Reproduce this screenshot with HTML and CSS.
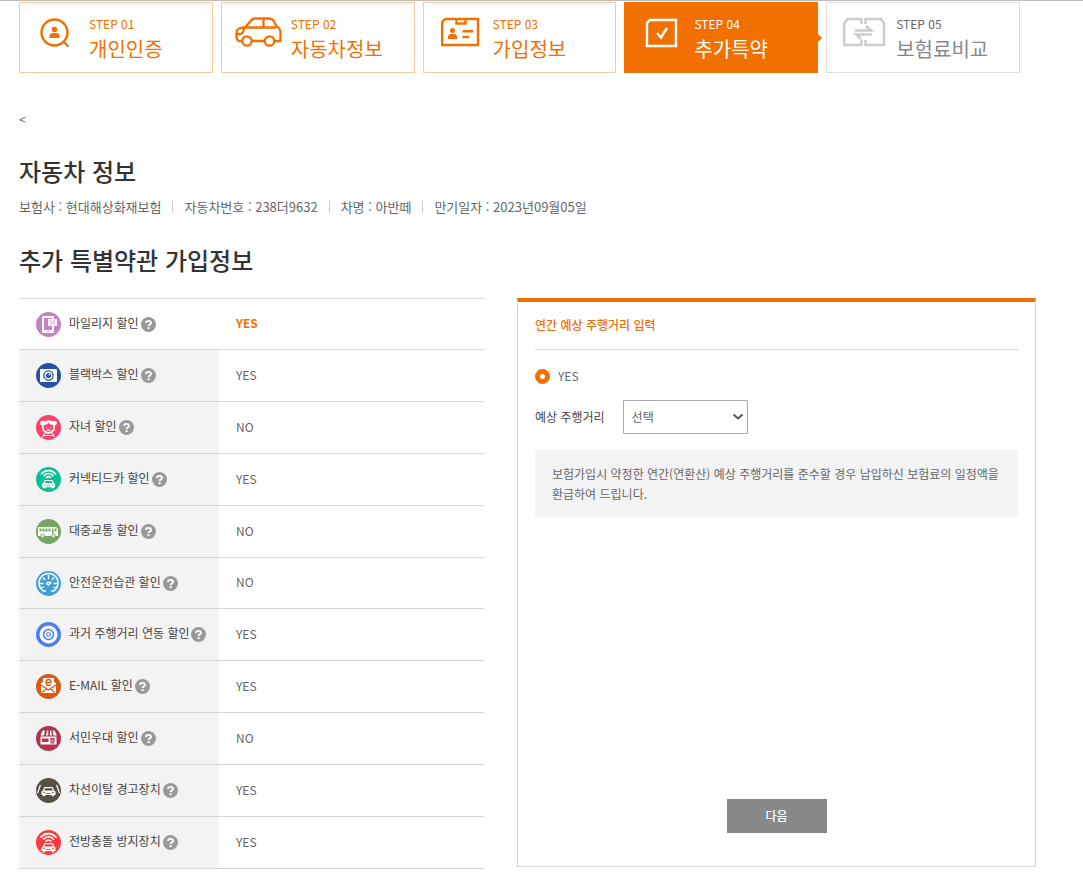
FILE: index.html
```html
<!DOCTYPE html>
<html lang="ko">
<head>
<meta charset="utf-8">
<meta name="viewport" content="width=device-width, initial-scale=1">
<title>추가특약</title>
<link rel="stylesheet" href="styles.css">
</head>
<body>
<svg class="defs" aria-hidden="true">
  <symbol id="help" viewBox="0 0 15 15">
    <circle cx="7.500" cy="7.500" r="7.500" fill="#999"/>
    <path d="M5 5.900C5 3.200 10 3.200 10 5.900C10 7.500 7.600 7.300 7.600 9" fill="none" stroke="#fff" stroke-width="1.900"/>
    <rect x="6.600" y="10.100" width="2" height="2" fill="#fff"/>
  </symbol>
  <symbol id="front-car" viewBox="0 0 16 10" preserveAspectRatio="none">
    <path d="M3.500 0.500h9l1.500 3.500 1.500 1v3.500h-1.500v1.500h-2.500v-1.500h-7v1.500H2v-1.500H.500V5L2 4z" fill="#fff"/>
    <path d="M4.300 1.700h7.400l.9 2.300H3.400z" fill="currentColor"/>
    <path d="M2 5.700l2.500.6M14 5.700l-2.500.6M5.500 7h5" stroke="currentColor" stroke-width=".8" fill="none"/>
  </symbol>
  <symbol id="waves" viewBox="0 0 18 10" preserveAspectRatio="none">
    <path d="M1 5Q9-3 17 5M3.700 7Q9 1.500 14.300 7M6.200 9Q9 6 11.800 9" fill="none" stroke="#fff" stroke-width="1.700"/>
  </symbol>
</svg>
<div class="page">
  <ol class="steps">
    <li class="step">
      <svg class="step-icon" viewBox="0 0 48 32"><g fill="none" stroke="#f27000" stroke-width="2.400"><circle cx="21.500" cy="15.500" r="13"/><path d="M30 24l5.500 5.500"/></g><circle cx="21.500" cy="12.500" r="2.800" fill="#f27000"/><path d="M16.500 21v-2q0-3 3.500-3h3q3.500 0 3.500 3v2z" fill="#f27000"/></svg>
      <div><span class="step-no">STEP 01</span><strong class="step-name">개인인증</strong></div>
    </li>
    <li class="step">
      <svg class="step-icon" viewBox="2 1 48 32"><g fill="none" stroke="#f27000" stroke-width="2.300"><path d="M9 25H6q-2.500-1-2.500-4v-4q0-4 4-5l5-1 6-7q1-1.500 4-1.500h13q4 0 5.500 3l2.500 5q4 1.500 4 6V25h-6M19 25h13M12 11.500h31M30.500 2.500v9M3.500 18h3q4 0 4.500-5.500"/><circle cx="14" cy="25" r="4.700"/><circle cx="36.500" cy="25" r="4.700"/></g></svg>
      <div><span class="step-no">STEP 02</span><strong class="step-name">자동차정보</strong></div>
    </li>
    <li class="step">
      <svg class="step-icon" viewBox="0 1 48 32"><g fill="none" stroke="#f27000" stroke-width="2.400"><path d="M5.200 29V6l3-3H41v26z"/><path d="M19.500 3v4.500h9V3" /><path d="M25.500 15.300H36M25.500 21H32"/></g><circle cx="15.500" cy="14.500" r="2.500" fill="#f27000"/><path d="M11 23v-2q0-3 3-3h3q3 0 3 3v2z" fill="#f27000"/></svg>
      <div><span class="step-no">STEP 03</span><strong class="step-name">가입정보</strong></div>
    </li>
    <li class="step step-active" aria-current="step">
      <svg class="step-icon" viewBox="0 1 48 32"><path d="M9 30V7l3-3h26v26z" fill="none" stroke="#fff" stroke-width="2.400"/><path d="M19 17l4 4.500L29 12" fill="none" stroke="#fff" stroke-width="2.400"/></svg>
      <div><span class="step-no">STEP 04</span><strong class="step-name">추가특약</strong></div>
    </li>
    <li class="step step-next">
      <svg class="step-icon" viewBox="0 1 48 32"><g fill="none" stroke="#ccc" stroke-width="2.400"><path d="M21.500 8V3H8L4.200 7v22h17.300v-5M25.500 8V3H41l3 4v22H25.500v-5"/><path d="M15 14.500h16l-5-4.500M32 18.500H16l5 4.500"/></g></svg>
      <div><span class="step-no">STEP 05</span><strong class="step-name">보험료비교</strong></div>
    </li>
  </ol>

  <a class="back" href="#" aria-label="이전">&lt;</a>

  <h1 class="heading">자동차 정보</h1>
  <ul class="car-info">
    <li>보험사 : 현대해상화재보험</li>
    <li>자동차번호 : 238더9632</li>
    <li>차명 : 아반떼</li>
    <li>만기일자 : 2023년09월05일</li>
  </ul>

  <h2 class="heading">추가 특별약관 가입정보</h2>
  <main class="columns">
    <table class="riders">
      <tbody>
        <tr class="selected"><th scope="row"><div class="rider"><svg class="rider-icon" viewBox="0 0 25 25"><circle cx="12.500" cy="12.500" r="12.500" fill="#c680c4"/><rect x="6" y="4" width="12" height="17" rx="1" fill="#fff"/><path d="M8 6h8v12H8z" fill="#c680c4"/><path d="M12 7h9v7h-3l-2 2v-2h-4z" fill="#fff"/><path d="M14 9h1M18 12h1M14.500 12.500l4-4" stroke="#c680c4"/><circle cx="12" cy="19.500" r=".8" fill="#c680c4"/></svg><span class="rider-name">마일리지 할인</span><button class="help" aria-label="마일리지 할인 도움말"><svg><use href="#help"/></svg></button></div></th><td>YES</td></tr>
        <tr><th scope="row"><div class="rider"><svg class="rider-icon" viewBox="0 0 25 25"><circle cx="12.500" cy="12.500" r="12.500" fill="#2950a3"/><rect x="4" y="6" width="17" height="13" rx="1" fill="#fff"/><circle cx="12.500" cy="12.500" r="4.600" fill="none" stroke="#2950a3" stroke-width="1.300"/><circle cx="12.500" cy="12.500" r="2.600" fill="#2950a3"/><circle cx="13.300" cy="11.700" r=".8" fill="#fff"/></svg><span class="rider-name">블랙박스 할인</span><button class="help" aria-label="블랙박스 할인 도움말"><svg><use href="#help"/></svg></button></div></th><td>YES</td></tr>
        <tr><th scope="row"><div class="rider"><svg class="rider-icon" viewBox="0 0 25 25"><circle cx="12.500" cy="12.500" r="12.500" fill="#fc406c"/><circle cx="6.300" cy="8" r="2.300" fill="#fff"/><circle cx="18.700" cy="8" r="2.300" fill="#fff"/><circle cx="12.500" cy="12" r="5.800" fill="none" stroke="#fff" stroke-width="1.700"/><path d="M7 10q5.500 0 5.500-3q0 3 5.500 3l-1-4H8z" fill="#fff"/><path d="M10.500 12v1M14.500 12v1M10.800 14.500q1.700 1.500 3.400 0M9 18l-2.500 4M16 18l2.500 4M8 20.500h9" stroke="#fff" fill="none" stroke-width="1.200"/></svg><span class="rider-name">자녀 할인</span><button class="help" aria-label="자녀 할인 도움말"><svg><use href="#help"/></svg></button></div></th><td>NO</td></tr>
        <tr><th scope="row"><div class="rider"><svg class="rider-icon icon-green" viewBox="0 0 25 25"><circle cx="12.500" cy="12.500" r="12.500" fill="#0abf94"/><use href="#waves" x="4" y="2.500" width="17" height="9.500"/><use href="#front-car" x="5.500" y="12.500" width="14" height="9"/></svg><span class="rider-name">커넥티드카 할인</span><button class="help" aria-label="커넥티드카 할인 도움말"><svg><use href="#help"/></svg></button></div></th><td>YES</td></tr>
        <tr><th scope="row"><div class="rider"><svg class="rider-icon" viewBox="0 0 25 25"><circle cx="12.500" cy="12.500" r="12.500" fill="#76a564"/><path d="M2 8h17q3 0 3 4v5H2z" fill="#fff"/><path d="M3.500 9.500h2v3h-2zM6.500 9.500h2v3h-2zM9.500 9.500h2v3h-2zM12.500 9.500h2v3h-2zM16 9.500h1.500v5H16zM18.500 9.500h2v3h-2z" fill="#76a564"/><circle cx="6.500" cy="17" r="1.800" fill="#fff" stroke="#76a564"/><circle cx="17.500" cy="17" r="1.800" fill="#fff" stroke="#76a564"/></svg><span class="rider-name">대중교통 할인</span><button class="help" aria-label="대중교통 할인 도움말"><svg><use href="#help"/></svg></button></div></th><td>NO</td></tr>
        <tr class="short"><th scope="row"><div class="rider"><svg class="rider-icon" viewBox="0 0 25 25"><circle cx="12.500" cy="12.500" r="12.500" fill="#449ed6"/><path d="M7.500 20A9.500 9.500 0 1 1 17.500 20" fill="none" stroke="#fff" stroke-width="1.500"/><path d="M12.500 4v4M7 6.500l2 2.500M18 6.500L16 9M4 12.500h3.500M21 12.500h-3.500M5 17l3-1M20 17l-3-1M7 20h3M15 20h3" stroke="#fff" stroke-width="1.300"/><path d="M16 11l-3-.3a2 2 0 1 0 1 2.800z" fill="#fff"/><circle cx="12.500" cy="12.600" r=".7" fill="#449ed6"/></svg><span class="rider-name">안전운전습관 할인</span><button class="help" aria-label="안전운전습관 할인 도움말"><svg><use href="#help"/></svg></button></div></th><td>NO</td></tr>
        <tr><th scope="row"><div class="rider"><svg class="rider-icon" viewBox="0 0 25 25"><circle cx="12.500" cy="12.500" r="12.500" fill="#4d80ef"/><circle cx="12.500" cy="12.500" r="9" fill="#fff"/><circle cx="12.500" cy="12.500" r="5" fill="none" stroke="#4d80ef" stroke-width="1.600"/><circle cx="12.500" cy="12.500" r="2.600" fill="#7ba2f5"/><path d="M12.500 11v3M11 12.500h3" stroke="#fff" stroke-width=".7"/></svg><span class="rider-name">과거 주행거리 연동 할인</span><button class="help" aria-label="과거 주행거리 연동 할인 도움말"><svg><use href="#help"/></svg></button></div></th><td>YES</td></tr>
        <tr><th scope="row"><div class="rider"><svg class="rider-icon" viewBox="0 0 25 25"><circle cx="12.500" cy="12.500" r="12.500" fill="#d25b16"/><path d="M5 9l2-1V4h11v4l2 1v10H5z" fill="#fff"/><path d="M10 8.500h5q0-3-2.500-3T10 8.500q0 3 2.500 3 1.500 0 2.300-1" fill="none" stroke="#d25b16" stroke-width="1.300"/><path d="M5 11l7.500 5 7.500-5M6 18.500l5-4M19 18.500l-5-4" fill="none" stroke="#d25b16" stroke-width="1.300"/></svg><span class="rider-name">E-MAIL 할인</span><button class="help" aria-label="E-MAIL 할인 도움말"><svg><use href="#help"/></svg></button></div></th><td>YES</td></tr>
        <tr><th scope="row"><div class="rider"><svg class="rider-icon" viewBox="0 0 25 25"><circle cx="12.500" cy="12.500" r="12.500" fill="#b0334e"/><path d="M6.500 4.500H9l-1 5H4.500zM11 4.500h1.300v5H10zM14 4.500h1l1 5h-2zM16.500 4.500h2l2.500 5h-3.500z" fill="#fff"/><path d="M4.500 10.500h16v8h-16z" fill="#fff"/><path d="M6 12.500h6.500V16H6zM14.500 12h4v5.500h-4z" fill="#b0334e"/><path d="M15.500 13h2v4h-2z" fill="#d58c9b"/></svg><span class="rider-name">서민우대 할인</span><button class="help" aria-label="서민우대 할인 도움말"><svg><use href="#help"/></svg></button></div></th><td>NO</td></tr>
        <tr><th scope="row"><div class="rider"><svg class="rider-icon icon-brown" viewBox="0 0 25 25"><circle cx="12.500" cy="12.500" r="12.500" fill="#575044"/><use href="#front-car" x="5" y="8.500" width="15" height="10"/><path d="M4.500 7L1.500 15M20.500 7l3 8" stroke="#fff" stroke-width="1.200"/></svg><span class="rider-name">차선이탈 경고장치</span><button class="help" aria-label="차선이탈 경고장치 도움말"><svg><use href="#help"/></svg></button></div></th><td>YES</td></tr>
        <tr><th scope="row"><div class="rider"><svg class="rider-icon icon-red" viewBox="0 0 25 25"><circle cx="12.500" cy="12.500" r="12.500" fill="#fc3b3d"/><use href="#waves" x="3.500" y="2.500" width="18" height="10"/><use href="#front-car" x="5" y="12.500" width="15" height="10"/></svg><span class="rider-name">전방충돌 방지장치</span><button class="help" aria-label="전방충돌 방지장치 도움말"><svg><use href="#help"/></svg></button></div></th><td>YES</td></tr>
      </tbody>
    </table>

    <form class="panel">
      <h3 class="panel-title">연간 예상 주행거리 입력</h3>
      <label class="radio"><input type="radio" name="mileage" checked>YES</label>
      <div class="field">
        <label for="distance">예상 주행거리</label>
        <div class="select">
          <select id="distance"><option>선택</option></select>
          <svg class="chevron" viewBox="0 0 12 8"><path d="M1.500 1.500L6 5.500l4.500-4" fill="none" stroke="#555" stroke-width="2"/></svg>
        </div>
      </div>
      <p class="note">보험가입시 약정한 연간(연환산) 예상 주행거리를 준수할 경우 납입하신 보험료의 일정액을 환급하여 드립니다.</p>
      <button class="next" type="button">다음</button>
    </form>
  </main>
</div>
</body>
</html>
```

FILE: styles.css
```css
* { box-sizing: border-box; }

body {
  margin: 0;
  border-top: 1px solid #bbb;
  background: #fff;
  color: #666;
  font-family: "Noto Sans CJK KR", sans-serif;
  font-size: 12px;
  line-height: 20px;
}

h1, h2, h3, p, ul, ol { margin: 0; padding: 0; }
ul, ol { list-style: none; }
button, select, input { font: inherit; }

.defs { display: none; }
.page { padding: 1px 47px 8px 19px; }

.steps {
  display: grid;
  grid-template-columns: repeat(5, 1fr);
  gap: 8px;
  margin-right: 16px;
}
.step {
  position: relative;
  display: flex;
  gap: 8px;
  height: 71px;
  padding: 12px 0 0 13px;
  border: 1px solid #fac9a0;
  color: #f27000;
}
.step-icon { width: 48px; height: 32px; margin-top: 2px; flex: none; }
.step-no { display: block; line-height: 18px; }
.step-name {
  display: block;
  font-size: 20px;
  font-weight: 400;
  line-height: 32px;
  white-space: nowrap;
}
.step-active { background: #f27000; border-color: #f27000; color: #fff; }
.step-active::after {
  content: "";
  position: absolute;
  top: 31px;
  right: -5px;
  border-left: 4px solid #f27000;
  border-top: 4px solid transparent;
  border-bottom: 4px solid transparent;
}
.step-next { border-color: #ddd; color: #888; }
.step-next .step-no { color: #666; }

.back {
  display: block;
  width: 20px;
  margin-top: 36px;
  color: #666;
  text-decoration: none;
}

.heading {
  color: #333;
  font-size: 24px;
  font-weight: 500;
  line-height: 36px;
}
h1.heading { margin-top: 24px; }
h2.heading { margin-top: 25px; }

.car-info {
  display: flex;
  flex-wrap: wrap;
  margin-top: 8px;
  font-size: 13px;
}
.car-info li { display: flex; align-items: center; }
.car-info li + li::before {
  content: "";
  width: 1px;
  height: 12px;
  margin: 0 11px;
  background: #ccc;
}

.columns {
  display: grid;
  grid-template-columns: 465fr 519fr;
  gap: 33px;
  margin-top: 20px;
}

.riders {
  width: 100%;
  border-collapse: collapse;
  border-top: 1px solid #d5d5d5;
}
.riders th, .riders td {
  height: 52px;
  padding: 0 0 0 17px;
  border-bottom: 1px solid #d5d5d5;
  font-weight: 400;
  text-align: left;
}
.riders td { padding-bottom: 2px; }
.riders th { width: 200px; background: #f3f3f3; color: #444; }
.riders .selected > *, .riders .short > * { height: 51px; }
.riders .selected th { background: #fff; }
.riders .selected td { color: #f27000; font-weight: 700; }
.rider { display: flex; align-items: center; white-space: nowrap; }
.rider-icon { width: 25px; height: 25px; margin-right: 8px; flex: none; }
.rider-name { padding-bottom: 3px; }
.icon-green { color: #0abf94; }
.icon-brown { color: #575044; }
.icon-red { color: #fc3b3d; }
.help {
  width: 15px;
  height: 15px;
  margin-left: 2px;
  padding: 0;
  border: 0;
  background: none;
  cursor: pointer;
}
.help svg { display: block; width: 15px; height: 15px; }

.panel {
  display: flex;
  flex-direction: column;
  margin-bottom: 2px;
  padding: 0 17px 33px;
  border: 1px solid #d5d5d5;
  border-top: 4px solid #f27000;
}
.panel-title {
  padding: 13px 0 14px;
  border-bottom: 1px solid #d5d5d5;
  color: #f27000;
  font-size: 12px;
  font-weight: 500;
}
.radio { display: flex; align-items: center; gap: 8px; margin-top: 16px; }
.radio input {
  appearance: none;
  width: 15px;
  height: 15px;
  margin: 0;
  border: 5px solid #f27000;
  border-radius: 50%;
  background: #fff;
}
.field { display: flex; align-items: center; gap: 18px; margin-top: 14px; color: #444; }
.select { position: relative; width: 125px; }
.select select {
  appearance: none;
  display: block;
  width: 100%;
  height: 34px;
  padding: 0 24px 0 8px;
  border: 1px solid #aaa;
  border-radius: 1px;
  background: #fff;
  color: #666;
}
.chevron {
  position: absolute;
  top: 13px;
  right: 4px;
  width: 12px;
  height: 8px;
  pointer-events: none;
}
.note { margin-top: 16px; padding: 14px 17px 13px; background: #f3f3f3; }
.next {
  align-self: center;
  width: 100px;
  height: 34px;
  margin-top: auto;
  border: 0;
  background: #888;
  color: #fff;
  font-weight: 500;
}
```
